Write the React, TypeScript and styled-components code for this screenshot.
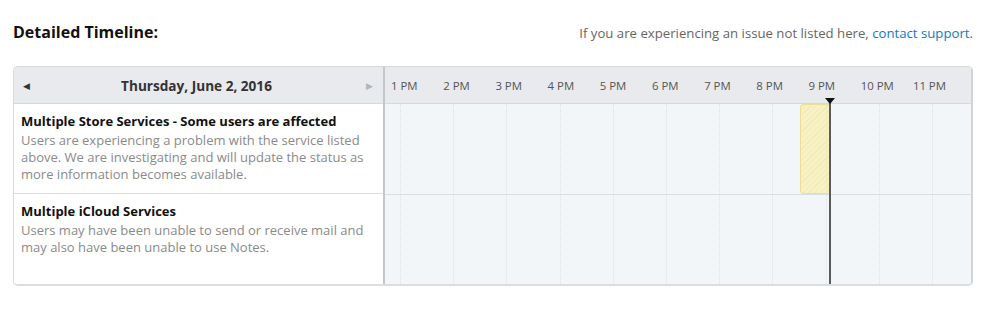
import React from 'react';
import styled, { createGlobalStyle } from 'styled-components';

const hours = ['1 PM', '2 PM', '3 PM', '4 PM', '5 PM', '6 PM', '7 PM', '8 PM', '9 PM', '10 PM', '11 PM'];

const events = [
  {
    title: 'Multiple Store Services - Some users are affected',
    text: 'Users are experiencing a problem with the service listed above. We are investigating and will update the status as more information becomes available.',
    block: { from: 7.66, to: 8.23 },
  },
  {
    title: 'Multiple iCloud Services',
    text: 'Users may have been unable to send or receive mail and may also have been unable to use Notes.',
    block: null,
  },
];

const HOUR_W = 52.2;
const LEAD = 15;
const NOW = 8.23;

const GlobalStyle = createGlobalStyle`
  body {
    margin: 0;
    background: #fff;
    font-family: "Open Sans", "Liberation Sans", sans-serif;
  }
`;

const App: React.FC = () => {
  return (
    <Page>
      <GlobalStyle />
      <TopBar>
        <Heading>Detailed Timeline:</Heading>
        <Note>
          If you are experiencing an issue not listed here, <Link>contact support</Link>.
        </Note>
      </TopBar>
      <Table>
        <DateCell>
          <Arrow>◀</Arrow>
          <DateText>Thursday, June 2, 2016</DateText>
          <Arrow $disabled>▶</Arrow>
        </DateCell>
        <Timeline>
          <HourRow>
            {hours.map((h) => (
              <HourCell key={h}>
                <HourLabel>{h}</HourLabel>
              </HourCell>
            ))}
          </HourRow>
          {events.map((ev) => (
            <Lane key={ev.title}>
              {ev.block && (
                <Block
                  style={{
                    left: LEAD + ev.block.from * HOUR_W,
                    width: (ev.block.to - ev.block.from) * HOUR_W,
                  }}
                />
              )}
              {hours.map((h) => (
                <GridCol key={h} />
              ))}
            </Lane>
          ))}
          <NowLine style={{ left: LEAD + NOW * HOUR_W }} />
        </Timeline>
        {events.map((ev, i) => (
          <InfoCell key={ev.title} $row={i + 2} $last={i === events.length - 1}>
            <InfoTitle>{ev.title}</InfoTitle>
            <InfoText>{ev.text}</InfoText>
          </InfoCell>
        ))}
      </Table>
    </Page>
  );
};

const Page = styled.div`
  padding: 21px 27px 0 13px;
`;

const TopBar = styled.div`
  display: flex;
  justify-content: space-between;
  align-items: baseline;
`;

const Heading = styled.h2`
  margin: 0;
  font-size: 16px;
  font-weight: 700;
  color: #111;
`;

const Note = styled.span`
  font-size: 13.2px;
  color: #666;
`;

const Link = styled.a`
  color: #0b7bc1;
  cursor: pointer;
`;

const Table = styled.div`
  margin-top: 23px;
  display: grid;
  grid-template-columns: 369px 1fr;
  grid-template-rows: 37px 90px 90px;
  border: 1px solid #d9d9d9;
  border-right: 2px solid #d2d4d6;
  border-bottom: 2px solid #dcdddf;
  border-radius: 5px;
  overflow: hidden;
`;

const DateCell = styled.div`
  grid-column: 1;
  grid-row: 1;
  display: flex;
  align-items: center;
  justify-content: space-between;
  padding: 0 10px 0 9px;
  background: #e8eaed;
  border-bottom: 1px solid #d6d8db;
`;

const Arrow = styled.span<{ $disabled?: boolean }>`
  font-size: 9px;
  color: ${(p) => (p.$disabled ? '#b3b5b8' : '#333')};
`;

const DateText = styled.span`
  font-size: 13.6px;
  font-weight: 700;
  color: #333;
  margin-right: 3px;
`;

const Timeline = styled.div`
  grid-column: 2;
  grid-row: 1 / span 3;
  position: relative;
  display: grid;
  grid-template-rows: 37px 90px 90px;
  border-left: 2px solid #c4c6c8;
  background: #f2f6f9;
`;

const HourRow = styled.div`
  display: flex;
  padding-left: ${LEAD}px;
  background: #e8eaed;
  border-bottom: 1px solid #d6d8db;
`;

const HourCell = styled.div`
  flex: 0 0 ${HOUR_W}px;
  display: flex;
  align-items: center;
`;

const HourLabel = styled.span`
  margin-left: -9px;
  font-size: 11.4px;
  color: #555;
  white-space: nowrap;
`;

const Lane = styled.div`
  position: relative;
  display: flex;
  padding-left: ${LEAD}px;
  & + & {
    border-top: 1px solid #dcdfe2;
  }
`;

const GridCol = styled.div`
  position: relative;
  flex: 0 0 ${HOUR_W}px;
  border-left: 1px dotted #dde2e6;
`;

const Block = styled.div`
  position: absolute;
  top: 0;
  bottom: 0;
  box-sizing: border-box;
  border: 1px solid #ebdf93;
  border-right: none;
  border-radius: 4px 0 0 4px;
  background: repeating-linear-gradient(
    135deg,
    #f7f1c4 0px,
    #f7f1c4 3px,
    #f2eab4 3px,
    #f2eab4 4px
  );
`;

const NowLine = styled.div`
  position: absolute;
  top: 33px;
  bottom: 0;
  width: 2px;
  margin-left: -1px;
  background: #5a5a5a;
  &::before {
    content: '';
    position: absolute;
    top: -2px;
    left: -4px;
    border-left: 5px solid transparent;
    border-right: 5px solid transparent;
    border-top: 6px solid #111;
  }
`;

const InfoCell = styled.div<{ $row: number; $last: boolean }>`
  grid-column: 1;
  grid-row: ${(p) => p.$row};
  padding: 7px 8px 0 7px;
  background: #fff;
  border-bottom: ${(p) => (p.$last ? 'none' : '1px solid #dcdfe2')};
`;

const InfoTitle = styled.div`
  font-size: 13px;
  font-weight: 700;
  color: #111;
  line-height: 20px;
  margin-bottom: 1px;
`;

const InfoText = styled.div`
  font-size: 13px;
  color: #8a8a8a;
  line-height: 17px;
`;

export default App;
